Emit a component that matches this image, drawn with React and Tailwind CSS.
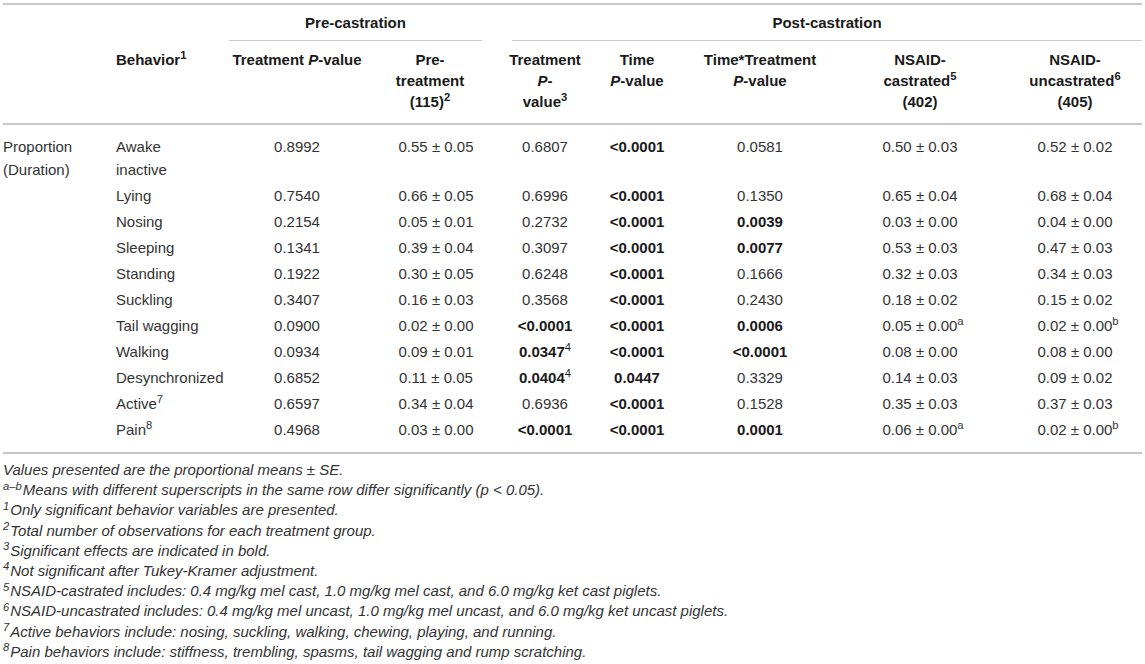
import React from 'react';

const cols = 'grid grid-cols-[113px_110px_142px_136px_82px_102px_144px_176px_134px]';

const rows = [
  ['Awake', ['0.8992', '0.55 ± 0.05', '0.6807', '*<0.0001', '0.0581', '0.50 ± 0.03', '0.52 ± 0.02'], 'inactive'],
  ['Lying', ['0.7540', '0.66 ± 0.05', '0.6996', '*<0.0001', '0.1350', '0.65 ± 0.04', '0.68 ± 0.04']],
  ['Nosing', ['0.2154', '0.05 ± 0.01', '0.2732', '*<0.0001', '*0.0039', '0.03 ± 0.00', '0.04 ± 0.00']],
  ['Sleeping', ['0.1341', '0.39 ± 0.04', '0.3097', '*<0.0001', '*0.0077', '0.53 ± 0.03', '0.47 ± 0.03']],
  ['Standing', ['0.1922', '0.30 ± 0.05', '0.6248', '*<0.0001', '0.1666', '0.32 ± 0.03', '0.34 ± 0.03']],
  ['Suckling', ['0.3407', '0.16 ± 0.03', '0.3568', '*<0.0001', '0.2430', '0.18 ± 0.02', '0.15 ± 0.02']],
  ['Tail wagging', ['0.0900', '0.02 ± 0.00', '*<0.0001', '*<0.0001', '*0.0006', '0.05 ± 0.00^a', '0.02 ± 0.00^b']],
  ['Walking', ['0.0934', '0.09 ± 0.01', '*0.0347^4', '*<0.0001', '*<0.0001', '0.08 ± 0.00', '0.08 ± 0.00']],
  ['Desynchronized', ['0.6852', '0.11 ± 0.05', '*0.0404^4', '*0.0447', '0.3329', '0.14 ± 0.03', '0.09 ± 0.02']],
  ['Active^7', ['0.6597', '0.34 ± 0.04', '0.6936', '*<0.0001', '0.1528', '0.35 ± 0.03', '0.37 ± 0.03']],
  ['Pain^8', ['0.4968', '0.03 ± 0.00', '*<0.0001', '*<0.0001', '*0.0001', '0.06 ± 0.00^a', '0.02 ± 0.00^b']],
];

// "*" = bold, "^x" = superscript
const Val = ({ s, hang }) => {
  const bold = s.startsWith('*');
  const [txt, sup] = (bold ? s.slice(1) : s).split('^');
  return (
    <span className={bold ? 'font-bold text-[#1a1a1a]' : ''}>
      {txt}
      {sup && <sup className={hang ? 'mr-[-6px] font-normal' : 'font-normal'}>{sup}</sup>}
    </span>
  );
};

const notes = [
  ['', 'Values presented are the proportional means ± SE.'],
  ['a–b', 'Means with different superscripts in the same row differ significantly (p < 0.05).'],
  ['1', 'Only significant behavior variables are presented.'],
  ['2', 'Total number of observations for each treatment group.'],
  ['3', 'Significant effects are indicated in bold.'],
  ['4', 'Not significant after Tukey-Kramer adjustment.'],
  ['5', 'NSAID-castrated includes: 0.4 mg/kg mel cast, 1.0 mg/kg mel cast, and 6.0 mg/kg ket cast piglets.'],
  ['6', 'NSAID-uncastrated includes: 0.4 mg/kg mel uncast, 1.0 mg/kg mel uncast, and 6.0 mg/kg ket uncast piglets.'],
  ['7', 'Active behaviors include: nosing, suckling, walking, chewing, playing, and running.'],
  ['8', 'Pain behaviors include: stiffness, trembling, spasms, tail wagging and rump scratching.'],
];

export default function App() {
  return (
    <div className="w-[1145px] h-[664px] overflow-hidden bg-white text-[15px] text-[#333] font-['Liberation_Sans',Arial,sans-serif]">
      <div className="mx-[3px] mt-[3px] border-t-2 border-[#c6c6c6]">
        {/* header */}
        <div className={`${cols} font-bold text-[#1a1a1a] leading-[21px] border-b-2 border-[#c6c6c6]`}>
          <div className="col-span-2" />
          <div className="col-span-2 ml-[3px] mr-[22px] pt-[7px] pb-[7px] text-center border-b border-[#cacaca]">
            Pre-castration
          </div>
          <div className="col-span-5 ml-[8px] pt-[7px] pb-[7px] text-center border-b border-[#cacaca]">
            Post-castration
          </div>

          <div className="pt-[8px] pb-[11px]" />
          <div className="pt-[8px] pb-[11px]">
            Behavior<sup>1</sup>
          </div>
          <div className="pt-[8px] pb-[11px] text-center">
            Treatment <i>P</i>-value
          </div>
          <div className="pt-[8px] pb-[11px] pr-[12px] text-center">
            Pre-<br />treatment<br />(115)<sup>2</sup>
          </div>
          <div className="pt-[8px] pb-[11px] text-center">
            Treatment<br /><i>P</i>-<br />value<sup>3</sup>
          </div>
          <div className="pt-[8px] pb-[11px] text-center">
            Time<br /><i>P</i>-value
          </div>
          <div className="pt-[8px] pb-[11px] text-center">
            Time*Treatment<br /><i>P</i>-value
          </div>
          <div className="pt-[8px] pb-[11px] text-center">
            NSAID-<br />castrated<sup>5</sup><br />(402)
          </div>
          <div className="pt-[8px] pb-[11px] text-center">
            NSAID-<br />uncastrated<sup>6</sup><br />(405)
          </div>
        </div>

        {/* body */}
        <div className={`${cols} leading-[23px] pt-[8px] pb-[10px] border-b-2 border-[#c6c6c6]`}>
          <div className="row-span-11 py-[1.5px]">
            Proportion<br />(Duration)
          </div>
          {rows.map(([name, vals, second]) => (
            <React.Fragment key={name}>
              <div className="py-[1.5px]">
                <Val s={name} />
                {second && (
                  <>
                    <br />
                    {second}
                  </>
                )}
              </div>
              {vals.map((v, i) => (
                <div key={i} className="py-[1.5px] text-center">
                  <Val s={v} hang={i >= 5} />
                </div>
              ))}
            </React.Fragment>
          ))}
        </div>

        {/* footnotes */}
        <div className="pt-[6px] italic leading-[20.2px]">
          {notes.map(([m, t]) => (
            <p key={t}>
              {m && <sup className="mr-[1px]">{m}</sup>}
              {t}
            </p>
          ))}
        </div>
      </div>
    </div>
  );
}
